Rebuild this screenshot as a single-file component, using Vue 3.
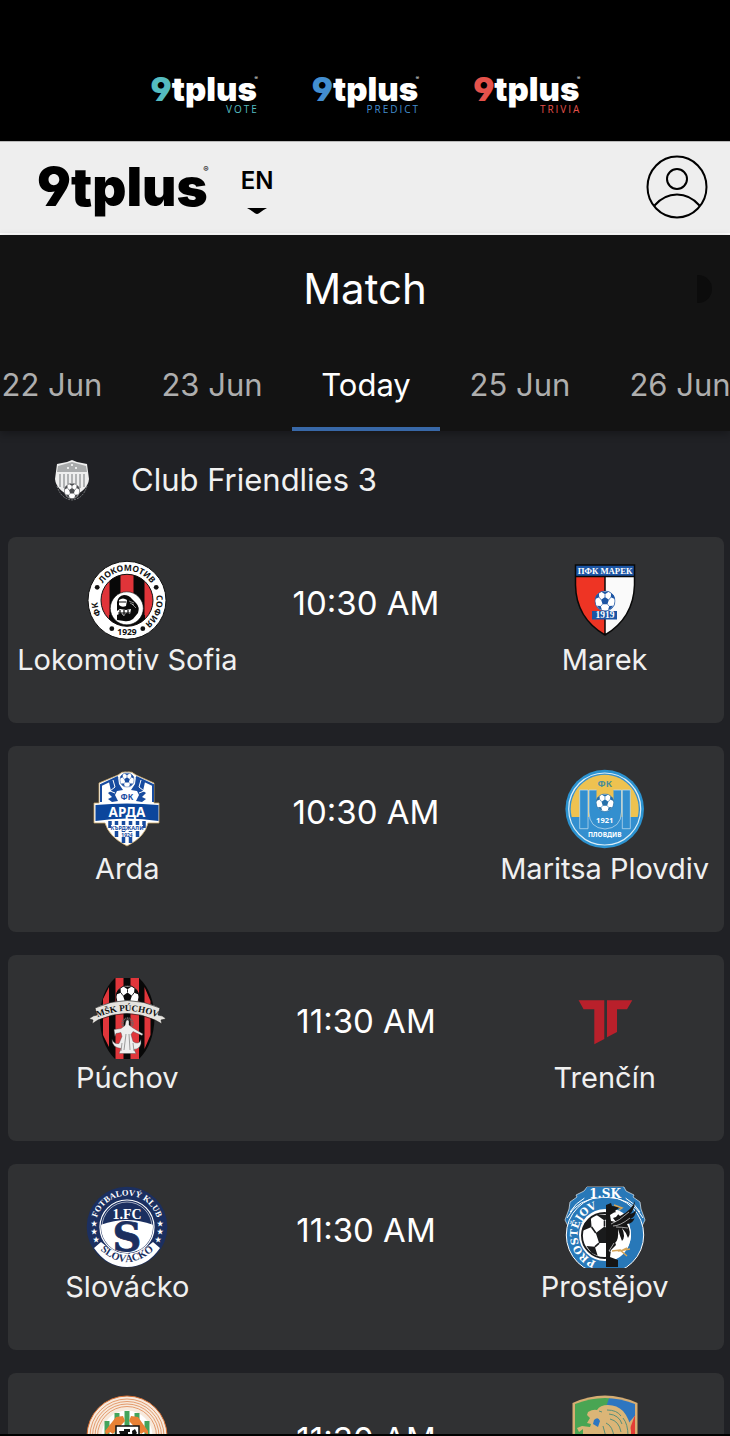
<script setup>
import { ref } from 'vue'

const products = [
  { label: 'VOTE', tone: 'teal' },
  { label: 'PREDICT', tone: 'blue' },
  { label: 'TRIVIA', tone: 'red' },
]
const days = ['22 Jun', '23 Jun', 'Today', '25 Jun', '26 Jun']
const activeDay = ref('Today')
const matches = [
  { time: '10:30 AM', home: { name: 'Lokomotiv Sofia', crest: 'lokomotiv' }, away: { name: 'Marek', crest: 'marek' } },
  { time: '10:30 AM', home: { name: 'Arda', crest: 'arda' }, away: { name: 'Maritsa Plovdiv', crest: 'maritsa' } },
  { time: '11:30 AM', home: { name: 'Púchov', crest: 'puchov' }, away: { name: 'Trenčín', crest: 'trencin' } },
  { time: '11:30 AM', home: { name: 'Slovácko', crest: 'slovacko' }, away: { name: 'Prostějov', crest: 'prostejov' } },
  { time: '11:30 AM', home: { name: '', crest: 'rings' }, away: { name: '', crest: 'lion' } },
]
</script>

<template>
  <div class="page">
    <svg class="defs" width="0" height="0" aria-hidden="true">
      <symbol id="ball" viewBox="0 0 20 20">
        <circle cx="10" cy="10" r="9.6" fill="#fff" stroke="currentColor" stroke-width=".8" />
        <path fill="currentColor" d="M10 6.2l3.7 2.7-1.4 4.3H7.7L6.3 8.9zM6.5 1.2h7L10 3.6zM.7 8l1-3.4 2.5-1.8.3 3.6zM19.3 8l-1-3.4-2.5-1.8-.3 3.6zM2.3 14.5l3.6.3 1.2 3.8-2.6-1.2zM17.7 14.5l-3.6.3-1.2 3.8 2.6-1.2z" />
        <path fill="none" stroke="currentColor" stroke-width=".7" d="M10 3.6v2.6M4.5 6.4l1.8 2.5M15.5 6.4l-1.8 2.5M7.7 13.2l-1.8 1.6M12.3 13.2l1.8 1.6" />
      </symbol>
    </svg>

    <nav class="products" aria-label="Products">
      <a v-for="p in products" :key="p.label" href="#" class="product" :class="p.tone">
        <span class="wordmark"><span class="nine">9</span>tplus<sup class="reg">®</sup></span>
        <span class="tag">{{ p.label }}</span>
      </a>
    </nav>

    <header class="topbar">
      <a href="#" class="brand"><span class="wordmark">9tplus<sup class="reg">®</sup></span></a>
      <button class="lang" type="button">
        EN
        <svg width="20" height="8" viewBox="0 0 20 8" aria-hidden="true"><path d="M0 1h20q-4 2-8 5.200-2 1.600-4 0Q4 3 0 1z" /></svg>
      </button>
      <button class="account" type="button" aria-label="Account">
        <svg width="62" height="64" viewBox="0 0 62 64" fill="none" stroke="#000" stroke-width="2">
          <ellipse cx="31" cy="32" rx="29.500" ry="30.500" />
          <circle cx="31" cy="24" r="10" />
          <path d="M8.500 50.500Q18 39.500 31 39.500T53.500 50.500" />
        </svg>
      </button>
    </header>

    <section class="heading">
      <div class="title-row">
        <h1>Match</h1>
        <button class="theme" type="button" aria-label="Theme"></button>
      </div>
      <div class="days">
        <button v-for="d in days" :key="d" type="button" class="day" :class="{ active: d === activeDay }" @click="activeDay = d">{{ d }}</button>
      </div>
    </section>

    <main class="content">
      <div class="league">
        <svg width="36" height="42" viewBox="0 0 36 42" aria-hidden="true">
          <path d="M3 27q4 13 15 14 11-1 15-14" fill="none" stroke="#77797b" stroke-dasharray="2 1" />
          <path d="M18 1l5 2 10 2 2 15q-1 11-17 18Q2 31 1 20L3 5l10-2z" fill="#eee" />
          <path d="M4 7l14-4 14 4 1 6H3z" fill="#a9abac" />
          <path d="M6 15v13M10 15v14M14 15v10M18 15v9M22 15v10M26 15v14M30 15v13" stroke="#b1b3b4" stroke-width="2" />
          <g fill="#fff"><circle cx="14" cy="9" r="1" /><circle cx="18" cy="6" r="1" /><circle cx="22" cy="9" r="1" /></g>
          <use href="#ball" x="10" y="24" width="16" height="16" color="#4b4d50" />
        </svg>
        <h2>Club Friendlies 3</h2>
      </div>

      <article v-for="(m, i) in matches" :key="i" class="card">
        <template v-for="side in ['home', 'away']" :key="side">
          <div class="team" :class="side">
            <svg class="crest" viewBox="0 0 82 82" aria-hidden="true">
              <g v-if="m[side].crest === 'lokomotiv'">
                <defs>
                  <path id="lok-ring" d="M11.500 41.300A29.500 29.500 0 1 1 11.500 41.400" />
                  <clipPath id="lok-clip"><circle cx="41" cy="41.300" r="26" /></clipPath>
                </defs>
                <circle cx="41" cy="41.300" r="39" fill="#fff" stroke="#111" />
                <g clip-path="url(#lok-clip)">
                  <path fill="#e03439" d="M0 0h82v82H0z" />
                  <path fill="#080808" d="M23.500 0h11v82h-11zM47.500 0h11v82h-11zM23 56h36v20H23z" />
                </g>
                <circle cx="41" cy="41.300" r="26" fill="none" stroke="#111" />
                <circle cx="40.800" cy="49.300" r="16.500" fill="#fff" stroke="#111" stroke-width=".6" />
                <path fill="#0a0a0a" d="M31 61V43q1-6 7-7 5 0 8 4l4 4q4 4 2 10l-5 6q-4 3-9 2z" />
                <path fill="#fff" d="M33 41q4-3 8 0l-1 6q-4 2-7-1zM31 52l3-2 6 1 5-1-1 5-4-1-2 3-3-3-4 2z" />
                <path fill="none" stroke="#080808" stroke-width="1.200" d="M33 43h7M34 51v5M38 51v5M42 51v4M32 54h12" />
                <path fill="none" stroke="#fff" stroke-width=".5" d="M43 42l5 2M44 44l4 2M46 45l4 4" />
                <g fill="#111"><circle cx="11.200" cy="28.300" r="2.400" /><circle cx="70.200" cy="28.300" r="2.400" /><circle cx="25.800" cy="69.700" r="2.400" /><circle cx="56.800" cy="69.700" r="2.400" /></g>
                <g class="sans" fill="#111" font-size="8.500" text-anchor="middle">
                  <text><textPath href="#lok-ring" startOffset="25%">ЛОКОМОТИВ</textPath></text>
                  <text><textPath href="#lok-ring" startOffset="56%">СОФИЯ</textPath></text>
                  <text><textPath href="#lok-ring" startOffset="95.500%">ФК</textPath></text>
                  <text x="41" y="76">1929</text>
                </g>
              </g>

              <g v-else-if="m[side].crest === 'marek'">
                <path d="M11.500 6h59v20q-1 33-29.500 50Q12 59 11.500 26z" fill="#fafafa" />
                <path d="M11.500 6H41v70Q12 59 11.500 26z" fill="#ee3424" />
                <path d="M11.500 6h59v11.500h-59z" fill="#1c55a4" />
                <path d="M11.500 17.500h59M41 17.500V76M11.500 6h59v20q-1 33-29.500 50Q12 59 11.500 26z" fill="none" stroke="#080808" stroke-width="1.500" />
                <use href="#ball" x="30.500" y="31.500" width="21" height="21" color="#1c55a4" />
                <path fill="#1c55a4" d="M28 52h25v8.500H28z" />
                <g class="serif" fill="#fff" text-anchor="middle"><text x="41" y="15" font-size="8.700">ПФК МАРЕК</text><text x="41" y="59.300" font-size="9.500">1919</text></g>
              </g>

              <g v-else-if="m[side].crest === 'arda'">
                <path d="M32 7q4-4 9-3 5-1 9 3l18 8v20h5v20H62q-3 14-21 23-18-9-22-23H8V35h5V15z" fill="#fff" stroke="#c9a76a" stroke-width=".8" />
                <path d="M15 34V17l17-8M67 34V17L50 9" fill="none" stroke="#174b9f" stroke-width="2" />
                <path fill="#174b9f" d="M23 14l9-5 1 7 4 6-6 1-2 4 3 6-6 1-4-3 4-2-4-4 3-2zM59 14l-9-5-1 7-4 6 6 1 2 4-3 6 6 1 4-3-4-2 4-4-3-2z" />
                <path fill="none" stroke="#fff" d="M27 12l2 7-5 4 5 2M55 12l-2 7 5 4-5 2" />
                <use href="#ball" x="33.500" y="4.500" width="15" height="15" color="#174b9f" />
                <path fill="#0c469c" d="M9.500 37q31.500-3 63 0v16q-31.500-5-63 0z" />
                <path stroke="#174b9f" stroke-width="3.500" d="M24 53v7M30.500 53v16M37.500 53v22M44.500 53v22M51.500 53v16M58 53v7" />
                <path fill="#fff" d="M25 57h32v6H25zM34 64h14v5H34z" />
                <g class="sans" text-anchor="middle" fill="#174b9f"><text x="41" y="31.500" font-size="8">ФК</text><text x="41" y="62.300" font-size="5.500">КЪРДЖАЛИ</text><text x="41" y="68.500" font-size="5">1924</text><text x="41" y="48.700" font-size="13.500" fill="#fff">АРДА</text></g>
              </g>

              <g v-else-if="m[side].crest === 'maritsa'">
                <circle cx="40.700" cy="41" r="39.300" fill="#2b92d0" />
                <circle cx="40.700" cy="41" r="36" fill="#338fcf" stroke="#dceef7" stroke-width="1.200" />
                <path d="M7.700 49a34 34 0 1 1 66 0z" fill="#eec250" />
                <path fill="#338fcf" d="M25 22h7.500v13a8.500 8.500 0 0 0 17 0V22h8v31a16.500 12 0 0 1-32.500 0z" />
                <g fill="#338fcf" stroke="#c8e1ef" stroke-width=".7"><path d="M15.700 22H24v38.700h-8.300zM58.300 22h8v38.700h-8z" /><path fill="none" d="M32.500 22H25v22q0 16 16 17 16-1 16.500-17V22h-8" /></g>
                <use href="#ball" x="31.700" y="25.500" width="18.500" height="18.500" color="#246faa" />
                <g class="sans" text-anchor="middle" fill="#fff"><text x="40.700" y="18.500" font-size="9" fill="#4b8c99">ФК</text><text x="40.700" y="54.500" font-size="7.500">1921</text><text x="40.700" y="68.500" font-size="6.500">ПЛОВДИВ</text></g>
              </g>

              <g v-else-if="m[side].crest === 'puchov'">
                <defs>
                  <clipPath id="puc-clip"><path d="M29 1h24q15 14 15.500 40Q68 67 53 82H29Q14 67 14 41T29 1z" /></clipPath>
                  <path id="puc-arc" d="M9 41.500Q41 26.500 74 41.500" />
                </defs>
                <g clip-path="url(#puc-clip)">
                  <path fill="#080808" d="M0 0h82v82H0z" />
                  <path fill="#e0363b" d="M17 22l6-12v60l-6-12zM29.500 0h8v82h-8zM44.500 0H53v82h-8.500zM58.500 10l6 14v34l-6 14z" />
                </g>
                <use href="#ball" x="29.500" y="8" width="24" height="24" color="#0a0a0a" />
                <path fill="#e5e3df" stroke="#151515" stroke-width=".6" d="M3 42q4-4 8-4l-2-7q32-15 65 0l-2 7q5 0 8 4l-5 1 1 4-7-4q-28-13-57 0l-6 4 1-4z" />
                <text class="serif" font-size="9" text-anchor="middle" fill="#111"><textPath href="#puc-arc" startOffset="50%">MŠK PÚCHOV</textPath></text>
                <circle cx="41.500" cy="46.500" r="5" fill="none" stroke="#666" stroke-width="2.500" stroke-dasharray="1 .6" />
                <path fill="#eee" stroke="#4a4a4a" stroke-width=".4" d="M40 44q1.500-2 3 0v4l4 3 10 6-1 1.500-9-4-2 3 2 7q6 4 8-2 1 9-7 10l2 4H33l2-5q-9-1-9-9 2 5 7 4l3-7-1-4-5 1-1 3-1-7 7-1 4-3z" />
                <path fill="none" stroke="#777" stroke-width=".7" d="M40 57l-2 16M43 57l1 16M36 66l-1 8M47 66l1 8" />
              </g>

              <g v-else-if="m[side].crest === 'trencin'" fill="#b9202b">
                <path d="M14.600 23.300h25.700V62l-10 5.300v-35H19.600z" />
                <path d="M43 23.300h25.300L63 32.300H53V55l-10 5.300z" />
              </g>

              <g v-else-if="m[side].crest === 'slovacko'">
                <defs>
                  <path id="slo-top" d="M9.500 41A31.500 31.500 0 0 1 72.500 41" />
                  <path id="slo-low" d="M10 60Q41 92 72 60" />
                  <clipPath id="slo-clip"><circle cx="41" cy="41" r="26" /></clipPath>
                </defs>
                <circle cx="41" cy="41" r="40.300" fill="#1b2f60" />
                <circle cx="41" cy="41" r="27" fill="#1b2f60" stroke="#fff" stroke-width="1.200" />
                <g clip-path="url(#slo-clip)"><path d="M12 40q29-12 58 0-2 23-17 28H29Q14 60 12 40z" fill="#fff" /></g>
                <circle cx="41" cy="41" r="25" fill="none" stroke="#fff" stroke-width=".6" />
                <text class="serif" x="41" y="33" text-anchor="middle" fill="#fff" font-size="14">1.FC</text>
                <path d="M8 62l7-6q26 24 52 0l7 6Q61 81 41 81T8 62z" fill="#fff" />
                <text class="slab" x="41" y="64.500" text-anchor="middle" fill="#1b2f60" stroke="#1b2f60" stroke-width=".8" font-size="40">S</text>
                <g class="serif" text-anchor="middle">
                  <text font-size="8.500" fill="#fff"><textPath href="#slo-top" startOffset="50%">FOTBALOVÝ KLUB</textPath></text>
                  <text font-size="10.500" fill="#1b2f60"><textPath href="#slo-low" startOffset="50%">SLOVÁCKO</textPath></text>
                </g>
                <g class="sans" text-anchor="middle" fill="#fff" font-size="7"><text x="8" y="40">★</text><text x="8" y="48">★</text><text x="10" y="56">★</text><text x="74" y="40">★</text><text x="74" y="48">★</text><text x="72" y="56">★</text></g>
              </g>

              <g v-else-if="m[side].crest === 'prostejov'">
                <defs>
                  <path id="pro-arc" d="M42 77A28 28 0 0 1 41 21" />
                </defs>
                <path d="M23 1h37l2 4 8 4-1 2 7 5 1 7 4 11-4 8H5l-4-8 4-11 1-7 7-5-1-2 8-4z" fill="#2878b8" stroke="#dce9f2" stroke-width=".7" />
                <circle cx="41" cy="49" r="38.700" fill="#2878b8" stroke="#fff" />
                <path d="M3 32q10-20 38-21 28 1 38 21M6 26Q17 8 41 7q24 1 35 19" fill="none" stroke="#fff" />
                <path fill="#2878b8" d="M23 1h36l3 12.500q-21-5-42 0z" />
                <circle cx="41" cy="49" r="26" fill="#fff" />
                <text class="slab" x="41" y="11.500" font-size="12" text-anchor="middle" fill="#fff">1.SK</text>
                <text class="slab" font-size="10.300" text-anchor="middle" fill="#fff"><textPath href="#pro-arc" startOffset="51%">PROSTĚJOV</textPath></text>
                <use href="#ball" x="17" y="26" width="47" height="47" color="#1a1b1c" />
                <path fill="#fff" d="M42 23q24-3 25 27-3 23-25 26z" />
                <path fill="#151515" d="M42 19l5-2 1 3 8 1-5 4 5 5q12-6 15-15-1 10-5 13 5-1 6-5 0 8-6 10 5 0 5-2-2 7-8 7 5 9 1 14-2-6-6-10 4 9 0 13-2-5-4-12 1 11-3 14-4-5-4-13l5 15-5 5-1 7 8 3v7H42z" />
                <path fill="#fff" d="M46 29q5-4 10-3l-4 5-3 1 3 4-5-1z" />
                <path fill="none" stroke="#fff" stroke-width=".6" d="M47 38q8-3 18-12M49 40q7 0 17-8M52 41q5 0 12 1M50 57l-5 8 7 1" />
                <path fill="none" stroke="#d6a558" stroke-width="1.500" d="M50 19l8 3-3 2M48 65l8-1 7 6M54 65l12-2M57 65l6-3" />
              </g>

              <g v-else-if="m[side].crest === 'rings'">
                <circle cx="41" cy="41" r="40" fill="#f7e9dc" stroke="#d86f32" />
                <g fill="none" stroke="#de8651" stroke-width=".8"><circle cx="41" cy="41" r="37" /><circle cx="41" cy="41" r="34.500" /><circle cx="41" cy="41" r="32" /><circle cx="41" cy="41" r="29.500" /></g>
                <circle cx="41" cy="41" r="25.500" fill="#fff" />
                <path stroke="#44a45b" stroke-width="5" d="M21 26v30M31 18v46M41 16v50M51 18v46M61 26v30" />
                <path fill="#e98135" d="M19 36l11-14 7-1 2 5-12 13-3-2-4 3zM62 36L52 22l-7-1-2 5 12 13 3-2 4 3z" />
                <path fill="#fff" stroke="#111" stroke-width="1.500" d="M30 31h23v27H30z" />
                <path fill="#111" d="M33 36h5v-2h6v3h-2v14h-4V39l-3 3zM46 36l3-2 2 4-3 3 2 3-3 4z" />
              </g>

              <g v-else>
                <defs><clipPath id="lion-clip"><path d="M11 9q30-12 60 0v73H11z" /></clipPath></defs>
                <path d="M8.500 8q32.500-15 65 0v74h-65z" fill="#d6ad72" />
                <g clip-path="url(#lion-clip)"><path fill="#49a553" d="M8 0h38L30 82H8z" /><path fill="#2d76c1" d="M46 0h28v17L58 36 30 50z" /><path fill="#e33d35" d="M74 12v70H48z" /></g>
                <path fill="#dbb577" d="M24 17q5-3 9-2 3-5 11-5 9 0 15 6 7 8 8 20v46H19V34l-4 3-2-4 5-2 8 1 1-3-4-1 3-5-3-3z" />
                <path fill="#2d76c1" d="M30 25q4-4 6 1l-2 6-5-3z" />
                <path fill="none" stroke="#4a8a78" stroke-width=".9" d="M35 16l3 1M43 15q10 0 14 6M45 19q10 1 13 10M46 24q9 2 11 13M42 28q7 3 8 15M39 31l3 11M59 23q5 6 5 18" />
              </g>
            </svg>
            <span v-if="m[side].name" class="name">{{ m[side].name }}</span>
          </div>
        </template>
        <time class="kickoff">{{ m.time }}</time>
      </article>
    </main>
  </div>
</template>

<style>
html,
body {
  margin: 0;
  background: #000;
}
</style>

<style scoped>
* {
  box-sizing: border-box;
}
.page {
  display: flex;
  flex-direction: column;
  height: 100vh;
  overflow: hidden;
  padding-bottom: 2px;
  background: #000;
  color: #fff;
  font-family: Inter, "Liberation Sans", sans-serif;
}
button {
  border: 0;
  padding: 0;
  background: none;
  color: inherit;
  font: inherit;
  cursor: pointer;
}
a {
  color: inherit;
  text-decoration: none;
}
h1,
h2 {
  margin: 0;
  font-weight: 400;
}
.defs {
  position: absolute;
}
.products {
  display: flex;
  flex: none;
  justify-content: center;
  gap: 55px;
  padding: 69px 0 24px;
  height: 141px;
}
.product {
  display: flex;
  flex-direction: column;
  align-items: flex-end;
}
.wordmark {
  position: relative;
  font-weight: 900;
  font-size: 33px;
  line-height: 40px;
  font-feature-settings: "ss01";
}
.reg {
  position: absolute;
  top: 5px;
  right: -1px;
  font-size: 5px;
  font-weight: 400;
  line-height: 8px;
}
.tag {
  margin: -6px -2px 0 0;
  font-family: "Open Sans", sans-serif;
  font-size: 10px;
  line-height: 12px;
  letter-spacing: 2px;
}
.teal .nine,
.teal .tag {
  color: #55bcc0;
}
.blue .nine,
.blue .tag {
  color: #438ed0;
}
.red .nine,
.red .tag {
  color: #e4524b;
}
.topbar {
  display: flex;
  flex: none;
  align-items: center;
  height: 94px;
  padding: 0 22px 2px 37px;
  background: #eee;
  border-top: 1px solid #b9b9b9;
  border-bottom: 2px solid #fff;
  color: #000;
}
.brand .wordmark {
  font-size: 53px;
  line-height: 64px;
}
.brand .reg {
  top: 10px;
  right: -1px;
  font-size: 8px;
}
.lang {
  display: flex;
  flex-direction: column;
  align-items: center;
  gap: 12px;
  margin-left: 33px;
  padding-top: 8px;
  font-size: 24px;
  font-weight: 600;
  line-height: 28px;
}
.account {
  height: 64px;
  margin-left: auto;
}
.heading {
  position: relative;
  flex: none;
  background: #131313;
  box-shadow: 0 3px 8px rgba(0, 0, 0, 0.3);
}
.title-row {
  display: grid;
  grid-template-columns: 1fr auto 1fr;
  align-items: center;
  height: 108px;
  padding-right: 18px;
}
.title-row h1 {
  grid-column: 2;
  padding-left: 18px;
  font-size: 42px;
  line-height: 48px;
}
.theme {
  justify-self: end;
  width: 15px;
  height: 28px;
  border-radius: 0 15px 15px 0;
  background: #0c0c0c;
}
.days {
  display: flex;
  justify-content: center;
  overflow: hidden;
  padding-left: 2px;
}
.day {
  flex: 0 0 160px;
  height: 88px;
  padding-bottom: 2px;
  border-bottom: 4px solid transparent;
  color: #aeaeae;
  font-size: 31px;
}
.day.active {
  flex-basis: 148px;
  border-color: #3868a7;
  color: #fff;
}
.content {
  display: flex;
  flex: 1;
  flex-direction: column;
  gap: 23px;
  min-height: 0;
  overflow: hidden;
  padding: 0 6px 0 8px;
  background: #202125;
}
.league {
  display: flex;
  flex: none;
  align-items: center;
  gap: 41px;
  height: 83px;
  padding: 14px 0 0 46px;
}
.league h2 {
  font-size: 31px;
  line-height: 36px;
  color: #f1f1f1;
}
.card {
  display: grid;
  flex: none;
  grid-template-columns: repeat(3, minmax(0, 1fr));
  height: 186px;
  padding-top: 22px;
  border-radius: 8px;
  background: #303133;
}
.team {
  grid-row: 1;
  display: flex;
  flex-direction: column;
  align-items: center;
}
.home {
  grid-column: 1;
}
.away {
  grid-column: 3;
}
.crest {
  width: 82px;
  height: 82px;
}
.name {
  font-size: 29px;
  line-height: 38px;
  white-space: nowrap;
  color: #f0f0f0;
}
.kickoff {
  grid-row: 1;
  grid-column: 2;
  padding-top: 26px;
  font-size: 33px;
  line-height: 36px;
  text-align: center;
}
.sans {
  font-family: "Noto Sans", sans-serif;
  font-weight: 700;
}
.serif {
  font-family: "Liberation Serif", serif;
  font-weight: 700;
}
.slab {
  font-family: "DejaVu Serif", serif;
  font-weight: 700;
}
</style>
